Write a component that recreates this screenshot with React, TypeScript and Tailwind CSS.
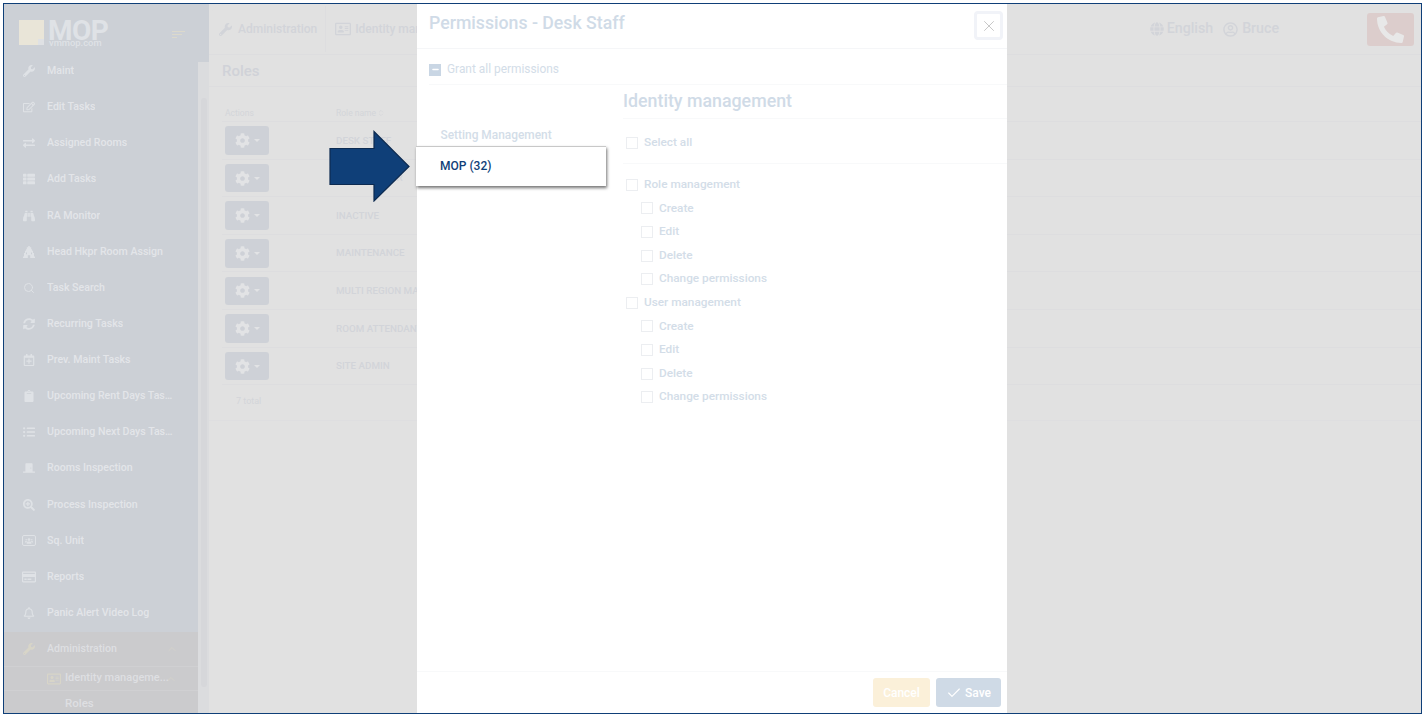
import { Check, ChevronUp, ChevronsUpDown, Minus, Search, X } from "lucide-react";
import {
  FaBinoculars,
  FaCog,
  FaExchangeAlt,
  FaGlobe,
  FaClipboard,
  FaDoorClosed,
  FaListUl,
  FaPhoneAlt,
  FaRegAddressCard,
  FaRegBell,
  FaRegCalendarPlus,
  FaRegCreditCard,
  FaRegEdit,
  FaRegUserCircle,
  FaSearchPlus,
  FaSyncAlt,
  FaThList,
  FaUsers,
  FaWrench,
} from "react-icons/fa";
import type { ComponentType } from "react";

const font = "font-['Roboto',_'Liberation_Sans',_sans-serif]";

function SquadIcon({ className }: { className?: string }) {
  return (
    <span className={`flex items-center justify-center rounded-[2px] border border-[#dfe2e6] ${className}`}>
      <FaUsers className="h-[8px] w-[8px]" />
    </span>
  );
}

function TowerIcon({ className }: { className?: string }) {
  return (
    <svg className={className} viewBox="0 0 12 12" fill="currentColor">
      <path d="M5.2 0h1.6v1.2h1.4v2H9v1.6h1V7h1v3.6h1V12H0v-1.4h1V7h1V4.8h1V3.2h.8v-2h1.4z" />
      <path d="M4.8 12V9.2h2.4V12zM3 6.4h1v1.8H3zM8 6.4h1v1.8H8z" fill="#ccd0d6" />
    </svg>
  );
}

const navItems: { label: string; icon: ComponentType<{ className?: string }>; size: string }[] = [
  { label: "Maint", icon: FaWrench, size: "h-3 w-3" },
  { label: "Edit Tasks", icon: FaRegEdit, size: "h-3 w-3" },
  { label: "Assigned Rooms", icon: FaExchangeAlt, size: "h-3 w-3" },
  { label: "Add Tasks", icon: FaThList, size: "h-3 w-3" },
  { label: "RA Monitor", icon: FaBinoculars, size: "h-3 w-3" },
  { label: "Head Hkpr Room Assign", icon: TowerIcon, size: "h-3 w-3" },
  { label: "Task Search", icon: Search, size: "h-3 w-3" },
  { label: "Recurring Tasks", icon: FaSyncAlt, size: "h-3 w-3" },
  { label: "Prev. Maint Tasks", icon: FaRegCalendarPlus, size: "h-3 w-3" },
  { label: "Upcoming Rent Days Tasks", icon: FaClipboard, size: "h-3 w-3" },
  { label: "Upcoming Next Days Tasks", icon: FaListUl, size: "h-3 w-3" },
  { label: "Rooms Inspection", icon: FaDoorClosed, size: "h-3 w-3" },
  { label: "Process Inspection", icon: FaSearchPlus, size: "h-3 w-3" },
  { label: "Sq. Unit", icon: SquadIcon, size: "-ml-[1px] mr-[-1px] h-[11px] w-[14px]" },
  { label: "Reports", icon: FaRegCreditCard, size: "-ml-[1px] mr-[-1px] h-[14px] w-[14px]" },
  { label: "Panic Alert Video Log", icon: FaRegBell, size: "h-3 w-3" },
];

const roles = [
  "DESK STAFF",
  "HOUSEKEEPER",
  "INACTIVE",
  "MAINTENANCE",
  "MULTI REGION MANAGER",
  "ROOM ATTENDANT",
  "SITE ADMIN",
];

const permissionGroups = [
  { name: "Role management", children: ["Create", "Edit", "Delete", "Change permissions"] },
  { name: "User management", children: ["Create", "Edit", "Delete", "Change permissions"] },
];

function Box() {
  return <span className="h-3 w-3 shrink-0 border border-[#eceef1] bg-white" />;
}

function Sidebar() {
  return (
    <aside className="flex w-[205px] shrink-0 flex-col bg-[#ccd0d6]">
      <div className="flex h-[49px] shrink-0 items-start pl-[15px] pt-[16px]">
        <span className="relative h-[25px] w-[25px] shrink-0 bg-[#e9e5d8]">
          <span className="absolute bottom-0 right-0 h-[6px] w-[6px] bg-[#dfe1e4]" />
        </span>
        <div className="ml-[4px] flex flex-col">
          <span className="h-[18px] text-[28px] font-bold leading-[22px] tracking-[-0.5px] text-[#dfe2e6]">
            MOP
          </span>
          <span className="ml-[1px] text-[9.4px] font-medium leading-[9px] text-[#dfe2e6]">
            vmmop.com
          </span>
        </div>
        <div className="ml-[64px] mt-[11px] flex flex-col gap-[2px]">
          <span className="h-px w-[13px] bg-[#dcd9cc]" />
          <span className="h-px w-[10px] bg-[#dcd9cc]" />
          <span className="h-px w-[5px] bg-[#dcd9cc]" />
        </div>
      </div>
      <div className="flex min-h-0 flex-1">
        <nav className="flex w-[194px] shrink-0 flex-col overflow-hidden">
          {navItems.map(({ label, icon: Icon, size }) => (
            <div key={label} className="flex h-[36.13px] shrink-0 items-center pl-[19px] pr-[23px]">
              <Icon className={`${size} shrink-0 text-[#dfe2e6]`} />
              <span className="ml-[12px] truncate text-[10.6px] font-medium text-[#e3e5e9]">
                {label}
              </span>
            </div>
          ))}
          <div className="mt-[1px] flex-1 bg-[#cbcbcd]">
            <div className="flex h-[35px] items-center border-b border-[#d0d0d2] pl-[19px] pr-[20px]">
              <FaWrench className="h-3 w-3 shrink-0 text-[#d8d5c8]" />
              <span className="ml-[12px] flex-1 text-[10.6px] font-medium text-[#dedfe2]">
                Administration
              </span>
              <ChevronUp className="h-3 w-3 text-[#d8d5c8]" strokeWidth={1.25} />
            </div>
            <div className="flex h-[24px] items-center border-b border-[#d0d0d2] pl-[43px]">
              <FaRegAddressCard className="h-[14px] w-[14px] shrink-0 text-[#d8d5c8]" />
              <span className="ml-[4px] w-[103px] shrink-0 whitespace-nowrap text-[11px] font-medium text-[#dedfe2]">
                Identity manageme...
              </span>
              <ChevronUp className="-ml-[3px] h-3 w-3 shrink-0 text-[#d8d5c8]" strokeWidth={1.25} />
            </div>
            <div className="flex h-[26px] items-center pl-[61px] text-[11.5px] font-medium text-[#dedfe2]">
              Roles
            </div>
          </div>
        </nav>
        <div className="flex w-[11px] flex-col bg-[#dbdcde]">
          <div className="h-[9px] shrink-0 bg-[#ccd0d6]" />
          <div className="pl-[3px] pt-[36px]">
            <div className="h-[589px] w-[6px] rounded-[3px] bg-[#d6d7da]" />
          </div>
        </div>
      </div>
    </aside>
  );
}

function TopBar() {
  return (
    <header className="flex h-[51px] shrink-0 items-center border-b border-[#dddddf] pl-[10px] pr-[7px]">
      <FaWrench className="h-[13px] w-[13px] text-[#d2d4d9]" />
      <span className="ml-[6px] text-[12px] font-medium text-[#d2d4d9]">Administration</span>
      <span className="ml-[8px] h-[46px] w-px bg-[#dddddf]" />
      <FaRegAddressCard className="ml-[9px] h-4 w-4 text-[#d2d4d9]" />
      <span className="ml-[4px] text-[12px] font-medium text-[#d2d4d9]">Identity management</span>
      <div className="flex-1" />
      <FaGlobe className="h-[14px] w-[14px] text-[#d2d4d9]" />
      <span className="ml-[3px] text-[14.2px] font-medium text-[#d2d4d9]">English</span>
      <FaRegUserCircle className="ml-[10px] h-[15px] w-[15px] text-[#d2d4d9]" />
      <span className="ml-[4px] text-[14.2px] font-medium text-[#d2d4d9]">Bruce</span>
      <span className="ml-[88px] flex h-[33px] w-[47px] items-center justify-center rounded-[3px] bg-[#dccdcc]">
        <FaPhoneAlt className="h-[27px] w-[27px] text-[#e8e8e8]" />
      </span>
    </header>
  );
}

function RolesTable() {
  return (
    <div className="pl-[13px]">
      <div className="-ml-[13px] flex h-[32px] items-center border-b border-[#dddddf] pl-[13px] pt-[1px] text-[15px] font-medium text-[#d0d2d8]">
        Roles
      </div>
      <div className="mt-[17px] flex h-[18px] items-center border-b border-[#dddddf] pl-[3px] pt-[1px] text-[8.5px] text-[#d3d5d9]">
        <span className="w-[111px]">Actions</span>
        <span>Role name</span>
        <ChevronsUpDown className="ml-[1px] h-2 w-2" />
      </div>
      {roles.map((role) => (
        <div key={role} className="flex h-[37.6px] items-center border-b border-[#dddddf] pl-[3px] pt-[0.5px]">
          <span className="flex h-[28.5px] w-[44px] shrink-0 items-center justify-center rounded-[3px] bg-[#ced1d7]">
            <FaCog className="h-[15px] w-[15px] text-[#e2e3e5]" />
            <span className="ml-[4px] h-0 w-0 border-x-[3px] border-t-[3px] border-x-transparent border-t-[#e2e3e5]" />
          </span>
          <span className="ml-[67px] mt-[1px] whitespace-nowrap text-[9.8px] font-medium text-[#d2d4d9]">
            {role}
          </span>
        </div>
      ))}
      <div className="-ml-[13px] h-[36px] border-b border-[#dedee0] pl-[27px] pt-[10px] text-[9px] text-[#d3d5d9]">
        7 total
      </div>
    </div>
  );
}

function PermissionsDialog() {
  return (
    <div className="absolute bottom-0 left-[413px] top-0 flex w-[590px] flex-col bg-white">
      <div className="flex h-[45px] shrink-0 items-center justify-between border-b border-[#f5f6f8] pl-[12px] pr-[4px]">
        <h2 className="-mt-[6px] text-[17.7px] font-medium text-[#d0dbe7]">Permissions - Desk Staff</h2>
        <button className="-mt-[1px] flex h-[29px] w-[29px] items-center justify-center rounded-[4px] border-[3px] border-[#f1f3f8] bg-white">
          <X className="h-[18px] w-[18px] text-[#c4c4c4]" strokeWidth={1.25} />
        </button>
      </div>
      <div className="ml-[12px] flex h-[36px] shrink-0 items-center gap-[6px] border-b border-[#f8f9fa] pt-[6px]">
        <span className="flex h-3 w-3 items-center justify-center bg-[#c9d6e4]">
          <Minus className="h-[9px] w-[9px] text-white" strokeWidth={3.5} />
        </span>
        <span className="text-[11.9px] text-[#d3dde8]">Grant all permissions</span>
      </div>
      <div className="flex min-h-0 flex-1">
        <div className="w-[206px] shrink-0 pl-[23.5px] pt-[42px] text-[11.9px] font-medium text-[#d3dde8]">
          Setting Management
        </div>
        <div className="flex-1">
          <h3 className="flex h-[34px] items-center border-b border-[#f8f9fa] text-[17.8px] font-medium text-[#d0dbe7]">
            Identity management
          </h3>
          <div className="flex h-[45px] items-center gap-[6px] border-b border-[#f8f9fa] pl-[3px] pt-[4px] text-[11.8px] font-medium text-[#d3dde8]">
            <Box />
            Select all
          </div>
          <div className="pl-[3px] pt-[9px] text-[11.8px] font-medium text-[#d3dde8]">
            {permissionGroups.map((group) => (
              <div key={group.name}>
                <div className="flex h-[23.6px] items-center gap-[6px]">
                  <Box />
                  {group.name}
                </div>
                {group.children.map((child) => (
                  <div key={child} className="flex h-[23.6px] items-center gap-[6px] pl-[15px]">
                    <Box />
                    {child}
                  </div>
                ))}
              </div>
            ))}
          </div>
        </div>
      </div>
      <div className="flex h-[42px] shrink-0 items-start justify-end gap-[6px] border-t border-[#f8f9fa] pr-[6px] pt-[6px] text-[12px] font-medium text-white">
        <button className="flex h-[29px] w-[57px] items-center justify-center rounded-[3px] bg-[#fbf0d9]">
          Cancel
        </button>
        <button className="flex h-[29px] w-[65px] items-center justify-center gap-[3px] rounded-[3px] bg-[#cfdae6]">
          <Check className="h-[16px] w-[16px]" strokeWidth={1.75} />
          Save
        </button>
      </div>
    </div>
  );
}

function Callout() {
  return (
    <>
      <div className="absolute left-[412px] top-[142px] flex h-[40px] w-[190px] items-center border-t border-[#c8c8c8] bg-white pb-[2px] pl-[24px] text-[12px] font-medium text-[#0f3f78] shadow-[1px_2px_3px_rgba(0,0,0,0.55)]">
        MOP (32)
      </div>
      <svg className="absolute left-[325px] top-[126px]" width="82" height="72" viewBox="0 0 82 72">
        <path
          d="M1 18.5H45V1.5L80 36.5L45 71V54.5H1Z"
          fill="#0f3f78"
          stroke="#0c2a50"
          strokeWidth="1.2"
        />
      </svg>
    </>
  );
}

export default function App() {
  return (
    <div className={`h-[718px] w-[1426px] overflow-hidden bg-white p-[3px] ${font}`}>
      <div className="relative flex h-[711px] w-[1419px] overflow-hidden border border-[#0f3f78] bg-[#e1e1e1]">
        <Sidebar />
        <main className="min-w-0 flex-1 rounded-tl-2xl bg-[#e1e1e1]">
          <TopBar />
          <RolesTable />
        </main>
        <PermissionsDialog />
        <Callout />
      </div>
    </div>
  );
}
